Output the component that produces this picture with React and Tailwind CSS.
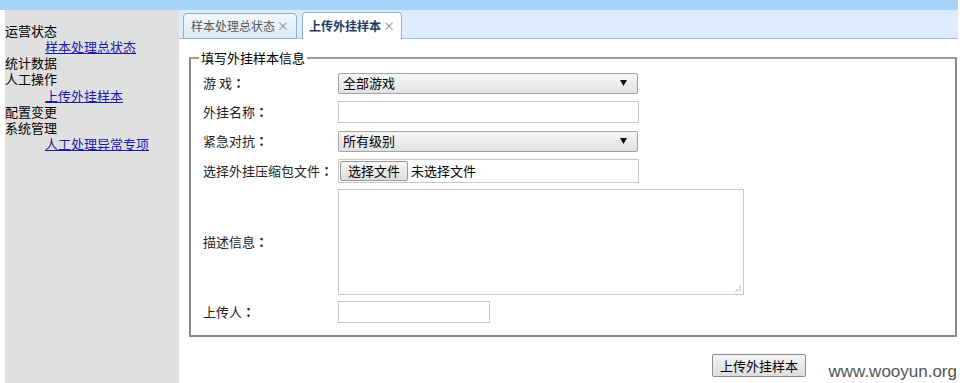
const font = { fontFamily: '"Noto Sans CJK SC", "Liberation Sans", sans-serif' }
const colonFont = { fontFamily: '"Noto Sans CJK TC", "Noto Sans CJK SC", sans-serif' }

function Select({ value }) {
    return (
        <div className="flex items-center justify-between w-[300px] h-[21px] px-[4px] border border-[#a3a3a3] rounded-[2px] bg-gradient-to-b from-[#f6f6f6] to-[#e2e2e2] text-[13px] text-black">
            <span>{value}</span>
            <svg className="mr-[6px]" width="7" height="6" viewBox="0 0 7 6">
                <path d="M0 0 H7 L3.5 6 Z" fill="#111" />
            </svg>
        </div>
    )
}

function Row({ label, children, className = "" }) {
    return (
        <div className={`flex items-center ${className}`}>
            <div className="w-[135px] text-[13px] text-[#222]">
                {label}
                <span className="font-bold" style={colonFont}>：</span>
            </div>
            {children}
        </div>
    )
}

export default function App() {
    return (
        <div className="relative w-[960px] h-[383px] bg-white overflow-hidden" style={font}>

            {/* Top bar */}
            <div className="h-[10px] mr-[2px] bg-[#a8d4fb]" />

            <div className="flex h-[373px]">

                {/* Sidebar */}
                <div className="w-[5px]" />
                <div className="w-[174px] bg-[#e0e0e0] pt-[13px] text-[13px] leading-[16px] text-black">
                    <div>运营状态</div>
                    <div className="pl-[40px]"><a className="text-[#1a1aa8] underline">样本处理总状态</a></div>
                    <div>统计数据</div>
                    <div>人工操作</div>
                    <div className="pl-[40px] pt-[1px]"><a className="text-[#1a1aa8] underline">上传外挂样本</a></div>
                    <div>配置变更</div>
                    <div>系统管理</div>
                    <div className="pl-[40px]"><a className="text-[#1a1aa8] underline">人工处理异常专项</a></div>
                </div>

                {/* Main */}
                <div className="flex-1 mr-[2px] flex flex-col">

                    {/* Tabs */}
                    <div className="h-[29px] bg-[#deedfd] border-b border-[#99bbe0] flex items-end pl-[4px] gap-[5px]">
                        <div className="w-[114px] h-[26px] -mb-[1px] flex items-center justify-center border border-[#8fb0d6] rounded-t-[4px] bg-gradient-to-b from-[#f4f8fd] to-[#dde9f6] text-[12px] text-[#555]">
                            样本处理总状态<span className="ml-[2px] text-[#888]">×</span>
                        </div>
                        <div className="w-[100px] h-[27px] -mb-[1px] flex items-center justify-center border border-b-0 border-[#8fb0d6] rounded-t-[4px] bg-white text-[12px] font-bold text-[#1d3c66]">
                            上传外挂样本<span className="ml-[2px] font-normal text-[#888]">×</span>
                        </div>
                    </div>

                    {/* Form */}
                    <fieldset className="mt-[9px] ml-[10px] mr-[1px] h-[289px] border-2 border-[#8a8a8a] border-t-[#9a9a9a] pl-[12px] pt-[2px]">
                        <legend className="px-[2px] ml-[-4px] text-[13px] text-black">填写外挂样本信息</legend>

                        <Row label="游 戏" className="mt-[3px]">
                            <Select value="全部游戏" />
                        </Row>

                        <Row label="外挂名称" className="mt-[7px]">
                            <div className="w-[301px] h-[22px] border border-[#c8c8c8] bg-white" />
                        </Row>

                        <Row label="紧急对抗" className="mt-[8px]">
                            <Select value="所有级别" />
                        </Row>

                        <Row label="选择外挂压缩包文件" className="mt-[7px]">
                            <div className="w-[301px] h-[24px] border border-[#c8c8c8] bg-white flex items-center pl-[1px] text-[13px]">
                                <div className="h-[20px] px-[7px] flex items-center border border-[#999] rounded-[2px] bg-gradient-to-b from-[#f5f5f5] to-[#dedede]">选择文件</div>
                                <span className="ml-[3px]">未选择文件</span>
                            </div>
                        </Row>

                        <Row label="描述信息" className="mt-[6px]">
                            <div className="relative w-[406px] h-[106px] border border-[#c8c8c8] bg-white">
                                <svg className="absolute right-[1px] bottom-[1px]" width="9" height="9" viewBox="0 0 9 9">
                                    <path d="M8 2 L2 8 M8 5 L5 8" stroke="#777" strokeWidth="1" strokeDasharray="1 1" />
                                </svg>
                            </div>
                        </Row>

                        <Row label="上传人" className="mt-[6px]">
                            <div className="w-[152px] h-[22px] border border-[#c8c8c8] bg-white" />
                        </Row>
                    </fieldset>

                    <div className="mt-[17px] ml-[533px]">
                        <div className="w-[94px] h-[23px] flex items-center justify-center border border-[#8c8c8c] rounded-[2px] bg-gradient-to-b from-[#f6f6f6] to-[#dcdcdc] text-[13px] text-black">
                            上传外挂样本
                        </div>
                    </div>
                </div>
            </div>

            {/* Watermark */}
            <div className="absolute right-[3px] bottom-[1px] text-[17px] leading-[20px] text-[#555]" style={{ fontFamily: '"Liberation Sans", Arial, sans-serif' }}>
                www.wooyun.org
            </div>
        </div>
    )
}
